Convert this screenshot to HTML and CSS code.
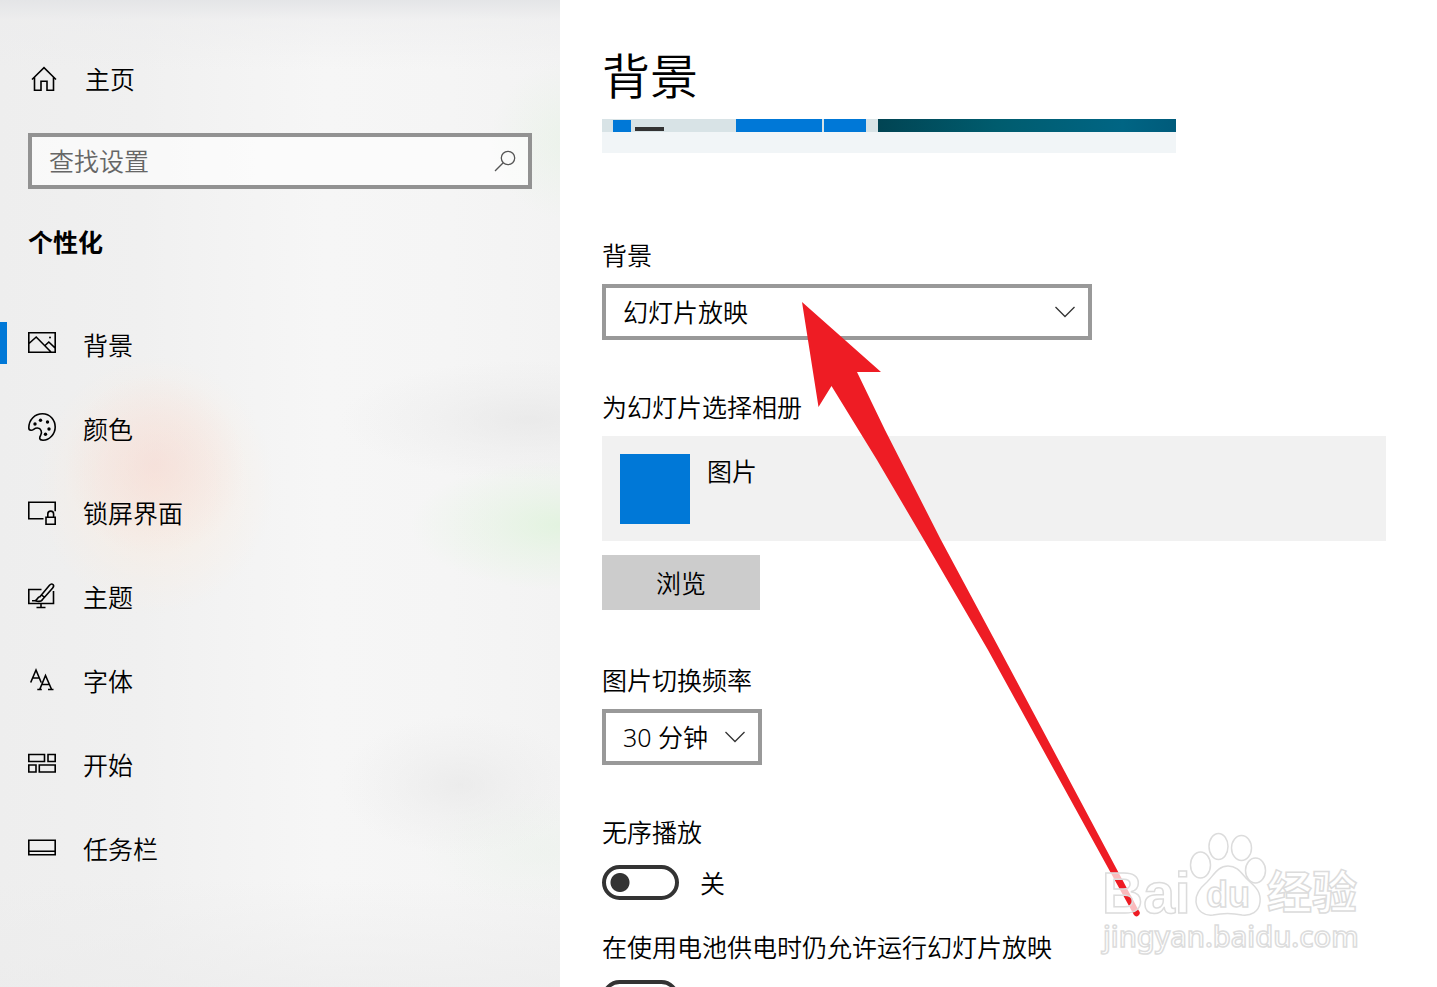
FILE: index.html
```html
<!DOCTYPE html>
<html lang="zh-CN">
<head>
<meta charset="utf-8">
<meta name="viewport" content="width=device-width, initial-scale=1">
<title>背景</title>
<link rel="stylesheet" href="styles.css">
</head>
<body>
<div class="app">
  <aside class="sidebar">
    <a class="home" href="#home">
      <svg class="icon" viewBox="0 0 28 28"><path d="M2 14.500 14 2.700l12 11.800M4.500 12.500V25.200H11v-9h6v9h6.500V12.500"/></svg>
      <span>主页</span>
    </a>
    <form class="search">
      <input class="search-input" type="search" placeholder="查找设置" aria-label="查找设置">
      <button class="search-button" type="button" aria-label="搜索">
        <svg class="search-icon" viewBox="0 0 22 22"><circle cx="14" cy="8" r="6.700"/><path d="M9.200 12.800 1 21"/></svg>
      </button>
    </form>
    <h2 class="group">个性化</h2>
    <nav class="nav">
      <a class="nav-item current" href="#background" aria-current="page">
        <svg class="icon" viewBox="0 0 28 28"><path d="M.8 3.700h26.400v19.600H.8zM1 14.500 8.200 8 23 23M16.500 17l4.300-4 6.200 5.800"/><circle class="dot" cx="22" cy="8.500" r="1"/></svg>
        <span class="nav-text">背景</span>
      </a>
      <a class="nav-item" href="#colors">
        <svg class="icon" viewBox="0 0 28 28"><path d="M.8 15C.8 6.500 7 .8 14.500.8 22 .8 27.200 7 27.200 14S21.500 27.200 15 27.200c-4.500 0-3.500-3.200-2.300-5 1.800-3.200.3-7-3.200-7.200C6 14.800 5.500 17.500 3 17.300 1.500 17.200.8 16.300.8 15z"/><g class="dot"><circle cx="7" cy="11" r="1.700"/><circle cx="12.500" cy="7.300" r="1.700"/><circle cx="19.500" cy="9" r="1.700"/><circle cx="21" cy="16" r="1.700"/><circle cx="17.500" cy="21.300" r="1.700"/></g></svg>
        <span class="nav-text">颜色</span>
      </a>
      <a class="nav-item" href="#lockscreen">
        <svg class="icon" viewBox="0 0 28 28"><path d="M15.500 21.700H.8V5.200h26.400v9M18 20.200h9.200v7H18zM19.800 20v-3a2.900 2.900 0 0 1 5.800 0v3"/></svg>
        <span class="nav-text">锁屏界面</span>
      </a>
      <a class="nav-item" href="#themes">
        <svg class="icon" viewBox="0 0 28 28"><path d="M13.500 8.500H.8V22.500h24.700V10M13 22.500v4M8.500 26.500h9M11.500 16.200 21.500 4.300c1.200-1.400 2.500-1.600 3.500-.8 1 1 .8 2.100-.3 3.400L14.500 18.500M13.500 13.800l3.200 2.700M11.500 15.800c-2.300.6-1.600 2.900-4.500 4H4M7 19.800c3 .8 6.800.7 7.600-1.600"/></svg>
        <span class="nav-text">主题</span>
      </a>
      <a class="nav-item" href="#fonts">
        <svg class="icon" viewBox="0 0 28 28"><path d="M2.700 17.500 8 5l5.200 12.500M4.500 13h7M9.300 24.500h4.500M20 24.500h5.500M11.800 24.300 17.500 10.500l6 13.800M13.800 19.500h7.500"/></svg>
        <span class="nav-text">字体</span>
      </a>
      <a class="nav-item" href="#start">
        <svg class="icon" viewBox="0 0 28 28"><path d="M.8 5.500h15.700v7H.8zM20 5.500h7.200v7H20zM.8 16h7.200v7H.8zM11.300 16h15.900v7H11.300z"/></svg>
        <span class="nav-text">开始</span>
      </a>
      <a class="nav-item" href="#taskbar">
        <svg class="icon" viewBox="0 0 28 28"><path d="M.8 7.200h26.400v14.600H.8zM1 18.200h26"/></svg>
        <span class="nav-text">任务栏</span>
      </a>
    </nav>
  </aside>

  <main class="content">
    <h1 class="title">背景</h1>
    <div class="scroller">
      <div class="preview">
        <div class="preview-row">
          <span class="preview-avatar"></span><span class="preview-line"></span>
          <span class="preview-tile wide"></span><span class="preview-tile"></span>
          <span class="preview-wall"></span>
        </div>
      </div>

      <section class="field">
        <label class="label" for="bg-type">背景</label>
        <div class="select-box">
          <select class="select" id="bg-type"><option>幻灯片放映</option></select>
          <svg class="chevron" viewBox="0 0 20 12"><path d="M.5 1 10 10.500 19.500 1"/></svg>
        </div>
      </section>

      <section class="field">
        <h2 class="label">为幻灯片选择相册</h2>
        <div class="album"><span class="album-cover"></span><span>图片</span></div>
        <button class="browse" type="button">浏览</button>
      </section>

      <section class="field after-button">
        <label class="label" for="interval">图片切换频率</label>
        <div class="select-box short">
          <select class="select" id="interval"><option>30 分钟</option></select>
          <svg class="chevron" viewBox="0 0 20 12"><path d="M.5 1 10 10.500 19.500 1"/></svg>
        </div>
      </section>

      <section class="field switch-field">
        <label class="label" for="shuffle">无序播放</label>
        <div class="switch"><input class="toggle" type="checkbox" role="switch" id="shuffle"><span>关</span></div>
      </section>

      <section class="field switch-field tight">
        <label class="label" for="battery">在使用电池供电时仍允许运行幻灯片放映</label>
        <div class="switch"><input class="toggle" type="checkbox" role="switch" id="battery"></div>
      </section>
    </div>
  </main>

  <svg class="arrow" viewBox="0 0 340 620" aria-hidden="true">
    <path d="M2 2 81 72H57L85 130 141 240 200 350 339 611a3 3 0 0 1-5 4L188 350 124 240 77 160 31.500 86 18.500 107z"/>
  </svg>
  <svg class="watermark" viewBox="0 0 270 130" aria-hidden="true">
    <text class="wm-bai" x="2" y="83">Bai</text>
    <g><ellipse cx="100.500" cy="35" rx="10" ry="13"/><ellipse cx="118.500" cy="16.500" rx="9.500" ry="13"/><ellipse cx="141.500" cy="18" rx="10" ry="12.500"/><ellipse cx="155.500" cy="40.500" rx="10" ry="12.500"/>
    <path d="M128 36c11 0 14 9 21 15 8 7 12 12 11 21-1 10-9 14-18 13-9-2-20-2-29 0-9 1-16-4-17-13-1-8 4-14 11-20 7-7 11-16 21-16z"/></g>
    <text class="wm-du" x="106" y="77">du</text>
    <text class="wm-cn" x="167" y="79">经验</text>
    <text class="wm-url" x="3" y="117">jingyan.baidu.com</text>
  </svg>
</div>
</body>
</html>
```
FILE: styles.css
```css
* { box-sizing: border-box; }

body {
  margin: 0;
  background: #fff;
  color: #000;
  font: 350 25px/34px "Noto Sans", "Noto Sans CJK SC", sans-serif;
}

h1, h2 { margin: 0; font-weight: inherit; font-size: inherit; }
a { color: inherit; text-decoration: none; }
button, input, select { font: inherit; color: inherit; border-radius: 0; }

.app {
  position: relative;
  display: grid;
  grid-template-columns: 560px 1fr;
  height: 100vh;
  overflow: hidden;
}

.sidebar {
  padding-top: 58px;
  background:
    radial-gradient(ellipse 90px 90px at 155px 465px, rgba(244, 210, 206, .45), rgba(244, 210, 206, .25) 45%, rgba(244, 210, 206, 0)),
    radial-gradient(ellipse 120px 130px at 155px 485px, rgba(255, 234, 216, .5), rgba(255, 234, 216, .3) 50%, rgba(255, 234, 216, 0)),
    radial-gradient(ellipse 150px 65px at 560px 525px, rgba(220, 243, 216, .7), rgba(220, 243, 216, .35) 45%, rgba(220, 243, 216, 0)),
    radial-gradient(ellipse 80px 80px at 570px 140px, rgba(228, 242, 226, .5), rgba(228, 242, 226, 0)),
    radial-gradient(ellipse 190px 60px at 530px 420px, rgba(228, 228, 228, .6), rgba(228, 228, 228, .25) 50%, rgba(228, 228, 228, 0)),
    radial-gradient(ellipse 120px 70px at 460px 785px, rgba(230, 230, 230, .6), rgba(230, 230, 230, .25) 50%, rgba(230, 230, 230, 0)),
    radial-gradient(ellipse 120px 60px at 540px 850px, rgba(232, 242, 232, .4), rgba(232, 242, 232, 0)),
    linear-gradient(#e4e5e7, rgba(236, 236, 237, .5) 20px, rgba(240, 240, 240, 0) 70px),
    linear-gradient(rgba(236, 236, 236, 0) 880px, rgba(236, 236, 236, .7)),
    linear-gradient(90deg, #eee, #f0f0f0 25%, #f3f3f3 40%, #f6f6f6 58%, #f5f5f5 80%, #f3f3f3);
}

.icon, .search-icon, .chevron {
  flex: none;
  fill: none;
  stroke: #000;
  stroke-width: 1.6;
}
.icon { width: 28px; height: 28px; }
.icon .dot { fill: #000; stroke: none; }

.home {
  display: flex;
  align-items: center;
  gap: 27px;
  height: 42px;
  padding-left: 30px;
}

.search {
  display: flex;
  margin: 33px 28px 0;
  height: 56px;
  border: 4px solid #929292;
  background: rgba(255, 255, 255, .6);
}
.search-input {
  flex: 1;
  min-width: 0;
  padding: 0 0 0 17px;
  border: 0;
  background: none;
  outline: 0;
}
.search-input::placeholder { color: #666; opacity: 1; }
.search-button {
  display: flex;
  align-items: center;
  padding: 0 12px;
  border: 0;
  background: none;
}
.search-icon { width: 22px; height: 22px; stroke: #555; stroke-width: 1.3; }

.group { margin: 36px 28px 0; font-weight: 700; }

.nav { margin-top: 42px; }
.nav-item {
  display: flex;
  align-items: center;
  gap: 27px;
  height: 84px;
  padding-left: 28px;
}
.nav-text { padding-top: 3px; }
.nav-item.current {
  background: linear-gradient(#0078d7, #0078d7) 0 50% / 7px 42px no-repeat;
}

.content {
  display: flex;
  flex-direction: column;
  min-width: 0;
  min-height: 0;
  padding: 42px 51px 0 42px;
}
.title { flex: none; height: 77px; font-size: 48px; line-height: 68px; }
.scroller { flex: 1; min-height: 0; overflow: hidden; }

.preview { max-width: 574px; height: 34px; background: #f1f5f7; }
.preview-row { display: flex; height: 13px; background: #d8e3e6; padding-left: 11px; }
.preview-avatar { width: 18px; margin-top: 1px; background: #0078d7; }
.preview-line { width: 29px; height: 4px; margin: 8px 72px 0 4px; background: #333; }
.preview-tile { width: 42px; margin-right: 12px; background: #0078d7; }
.preview-tile.wide { width: 86px; margin-right: 2px; }
.preview-wall { flex: 1; background: linear-gradient(90deg, #014453, #005c6e 40%, #006584 82%, #005b7b); }

.field { padding-top: 50px; }
.preview + .field { padding-top: 85px; }
.field.after-button { padding-top: 53px; }
.field.tight { padding-top: 30px; }
.label { display: block; margin-bottom: 12px; }
.switch-field .label { margin-bottom: 16px; }

.select-box { display: grid; max-width: 490px; }
.select-box.short { max-width: 160px; }
.select-box > * { grid-area: 1 / 1; }
.select {
  width: 100%;
  height: 56px;
  padding: 0 40px 0 17px;
  border: 4px solid #999;
  background: #fff;
  appearance: none;
}
.chevron {
  width: 20px;
  height: 12px;
  margin-right: 17px;
  align-self: center;
  justify-self: end;
  stroke: #333;
  stroke-width: 1.3;
  pointer-events: none;
}

.album {
  display: flex;
  gap: 17px;
  height: 105px;
  padding: 18px;
  background: #f1f1f1;
}
.album-cover { width: 70px; height: 70px; background: #0078d7; }

.browse {
  display: block;
  width: 158px;
  height: 55px;
  margin-top: 14px;
  padding: 0;
  border: 0;
  background: #ccc;
}

.switch { display: flex; align-items: center; gap: 21px; height: 35px; }
.toggle {
  width: 77px;
  height: 35px;
  margin: 0;
  border: 4px solid #333;
  border-radius: 18px;
  background: radial-gradient(circle at 14px 50%, #333 9px, transparent 10px);
  appearance: none;
}

.arrow, .watermark { position: absolute; pointer-events: none; }
.arrow { left: 800px; top: 300px; width: 340px; height: 620px; fill: #ee1c24; }
.watermark {
  left: 1100px;
  top: 830px;
  width: 270px;
  height: 130px;
  overflow: visible;
  fill: rgba(255, 255, 255, .7);
  stroke: #dcdcdc;
  stroke-width: 1.5;
  font-family: "Liberation Sans", "Noto Sans CJK SC", sans-serif;
  font-weight: 700;
}
.wm-bai { font-size: 57px; }
.wm-du { font-size: 36px; }
.wm-cn { font-size: 45px; }
.wm-url { font: 500 29px "Noto Sans", sans-serif; }
```
